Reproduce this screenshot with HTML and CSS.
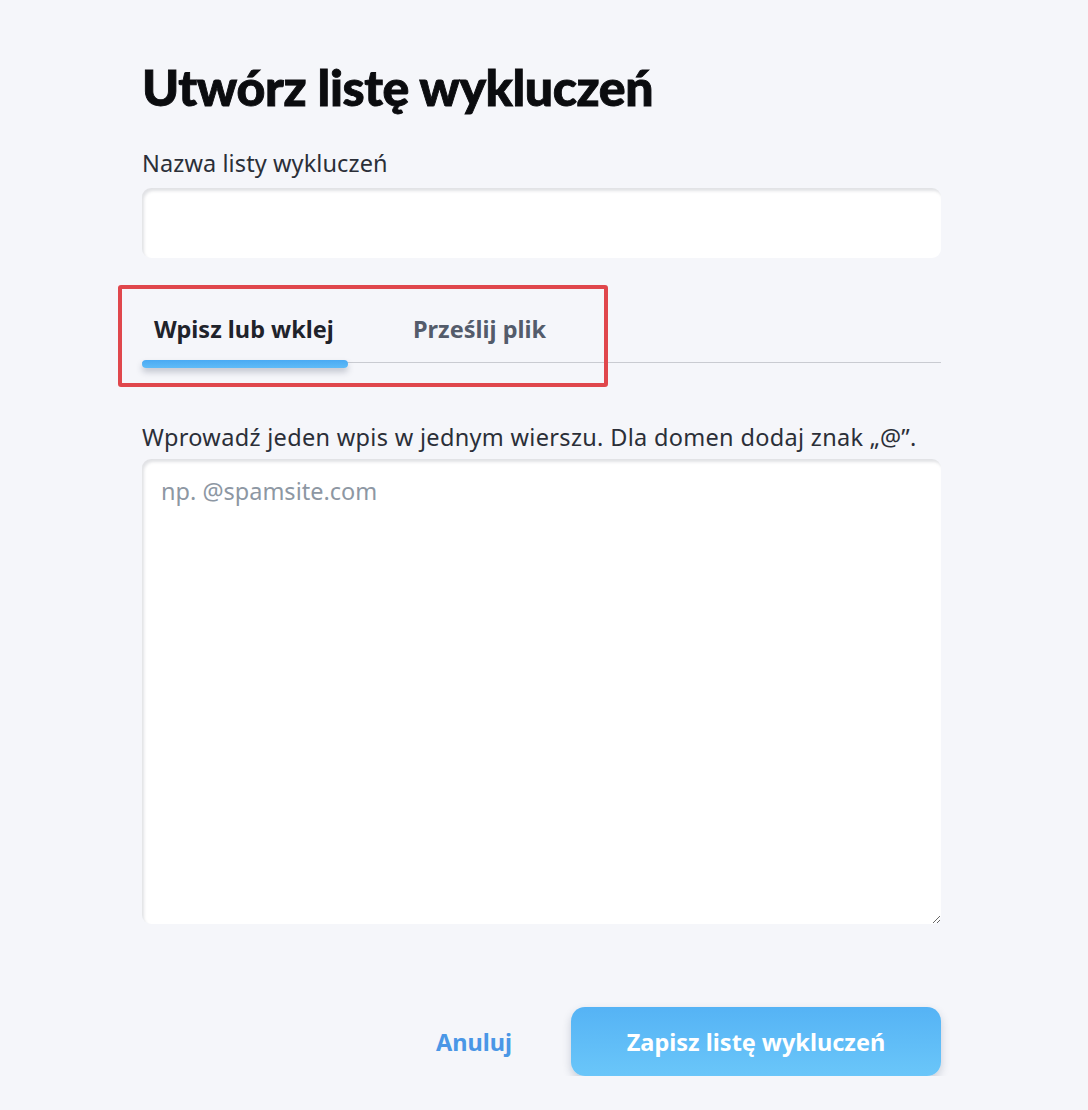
FILE: index.html
```html
<!DOCTYPE html>
<html lang="pl">
<head>
<meta charset="utf-8">
<title>Utwórz listę wykluczeń</title>
<link rel="stylesheet" href="styles.css">
</head>
<body>
<main class="page">
  <h1 class="title">Utwórz listę wykluczeń</h1>
  <label class="label" for="name">Nazwa listy wykluczeń</label>
  <input class="field" id="name" type="text">
  <div class="tabs-wrap">
    <div class="tabs">
      <button class="tab tab-active">Wpisz lub wklej</button>
      <button class="tab">Prześlij plik</button>
    </div>
    <div class="highlight"></div>
  </div>
  <p class="hint">Wprowadź jeden wpis w jednym wierszu. Dla domen dodaj znak „@”.</p>
  <textarea class="area" placeholder="np. @spamsite.com"></textarea>
  <div class="actions">
    <button class="btn-link">Anuluj</button>
    <button class="btn-primary">Zapisz listę wykluczeń</button>
  </div>
</main>
</body>
</html>
```

FILE: styles.css
```css
html, body {
  margin: 0;
  padding: 0;
  background: #f5f6fa;
}
body {
  font-family: "Noto Sans", Lato, sans-serif;
  color: #2b2f38;
}
.page {
  width: 799px;
  margin-left: 142px;
  padding-top: 56px;
  display: flex;
  flex-direction: column;
}
.title {
  margin: 0;
  font-family: Lato, "Noto Sans", sans-serif;
  font-size: 50px;
  font-weight: 900;
  line-height: 62px;
  color: #0b0c0f;
  letter-spacing: -0.4px;
  -webkit-text-stroke: 0.9px #0b0c0f;
}
.label {
  margin-top: 32px;
  font-size: 23.5px;
  line-height: 26px;
  color: #2b2f38;
  letter-spacing: 0.1px;
}
.field {
  margin-top: 12px;
  height: 70px;
  box-sizing: border-box;
  border: none;
  border-radius: 9px;
  background: #fff;
  box-shadow: inset 2px 3px 3px rgba(40, 50, 70, 0.14);
  outline: none;
  font: inherit;
  font-size: 23px;
  padding: 0 18px;
}
.tabs-wrap {
  position: relative;
  margin-top: 52px;
}
.tabs {
  display: flex;
  border-bottom: 1px solid #c9cbd1;
  height: 53px;
  box-sizing: border-box;
}
.tab {
  border: none;
  background: none;
  font-family: inherit;
  font-size: 23.5px;
  font-weight: 700;
  color: #545c6b;
  padding: 0 12px 16px;
  cursor: pointer;
  position: relative;
  height: 53px;
  box-sizing: border-box;
  text-align: left;
}
.tab-active {
  color: #1f232b;
  width: 206px;
  margin-right: 53px;
}
.tab-active::after {
  content: "";
  position: absolute;
  left: 0;
  right: 0;
  bottom: -5px;
  height: 8px;
  border-radius: 4px;
  background: linear-gradient(#4aaaf3, #5fbbf7);
  box-shadow: 0 4px 6px rgba(40, 50, 80, 0.25);
}
.highlight {
  position: absolute;
  left: -24px;
  top: -25px;
  width: 482px;
  height: 94px;
  border: 4px solid #e0474c;
  border-radius: 3px;
  pointer-events: none;
}
.hint {
  margin: 61px 0 0;
  font-size: 23.5px;
  line-height: 26px;
  color: #2b2f38;
  letter-spacing: 0.32px;
}
.area {
  margin-top: 9px;
  height: 465px;
  box-sizing: border-box;
  border: none;
  border-radius: 9px;
  background: #fff;
  box-shadow: inset 2px 3px 3px rgba(40, 50, 70, 0.14);
  outline: none;
  resize: vertical;
  font-family: inherit;
  font-size: 23.5px;
  line-height: 28px;
  color: #2b2f38;
  padding: 18px 19px;
}
.area::placeholder {
  color: #8d97a3;
}
.actions {
  margin-top: 83px;
  display: flex;
  justify-content: flex-end;
  align-items: center;
  gap: 59px;
}
.btn-link {
  border: none;
  background: none;
  font-family: inherit;
  font-size: 23.5px;
  font-weight: 700;
  color: #4a97e6;
  padding: 0;
  cursor: pointer;
}
.btn-primary {
  width: 370px;
  height: 69px;
  border: none;
  border-radius: 14px;
  background: linear-gradient(#55b3f5, #6ac6f9);
  color: #fff;
  font-family: inherit;
  font-size: 23.5px;
  font-weight: 700;
  box-shadow: 0 4px 8px rgba(40, 60, 90, 0.22);
  cursor: pointer;
}
```
